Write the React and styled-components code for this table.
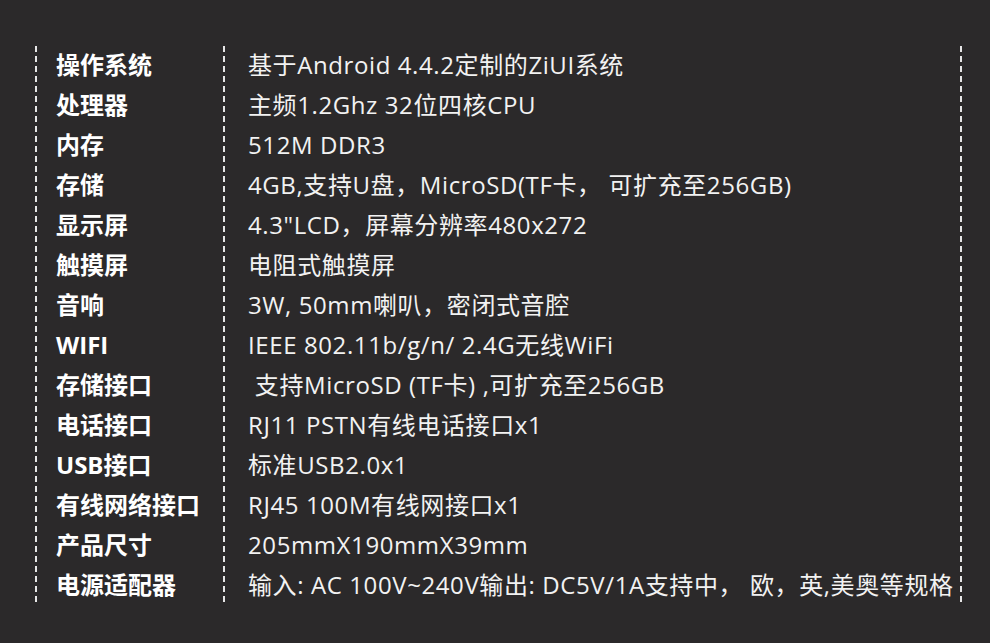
import styled, { createGlobalStyle } from 'styled-components';

const specs = [
  ['操作系统', '基于Android 4.4.2定制的ZiUI系统'],
  ['处理器', '主频1.2Ghz 32位四核CPU'],
  ['内存', '512M DDR3'],
  ['存储', '4GB,支持U盘，MicroSD(TF卡， 可扩充至256GB)'],
  ['显示屏', '4.3"LCD，屏幕分辨率480x272'],
  ['触摸屏', '电阻式触摸屏'],
  ['音响', '3W, 50mm喇叭，密闭式音腔'],
  ['WIFI', 'IEEE 802.11b/g/n/ 2.4G无线WiFi'],
  ['存储接口', '\u00a0支持MicroSD (TF卡) ,可扩充至256GB'],
  ['电话接口', 'RJ11 PSTN有线电话接口x1'],
  ['USB接口', '标准USB2.0x1'],
  ['有线网络接口', 'RJ45 100M有线网接口x1'],
  ['产品尺寸', '205mmX190mmX39mm'],
  ['电源适配器', '输入: AC 100V~240V输出: DC5V/1A支持中， 欧，英,美奥等规格'],
];

const Global = createGlobalStyle`
  html, body {
    margin: 0;
    background: #2b292a;
  }
  body {
    width: 990px;
    height: 643px;
    overflow: hidden;
  }
`;

const dash = 'repeating-linear-gradient(to bottom, #e6e6e6 0 6px, transparent 6px 10px)';

const Sheet = styled.div`
  margin: 46px 0 0 35px;
  width: 927px;
  display: grid;
  grid-template-columns: 188px 1fr;
  grid-auto-rows: 40px;
  background-image: ${dash}, ${dash}, ${dash};
  background-size: 2px 100%;
  background-repeat: no-repeat;
  background-position: 0 0, 188px 0, 925px 0;
  font-family: 'Open Sans', 'Noto Sans CJK SC', sans-serif;
  font-size: 24px;
  line-height: 1;
  color: #f2f2f2;
`;

const Label = styled.div`
  display: flex;
  align-items: center;
  padding: 0 0 3px 21px;
  font-weight: 700;
  color: #ffffff;
  white-space: nowrap;
`;

const Value = styled.div`
  display: flex;
  align-items: center;
  padding: 0 0 3px 25px;
  letter-spacing: 0.6px;
  white-space: nowrap;
`;

export default function App() {
  return (
    <>
      <Global />
      <Sheet>
        {specs.map(([k, v]) => (
          <>
            <Label key={k}>{k}</Label>
            <Value key={k + 'v'}>{v}</Value>
          </>
        ))}
      </Sheet>
    </>
  );
}
